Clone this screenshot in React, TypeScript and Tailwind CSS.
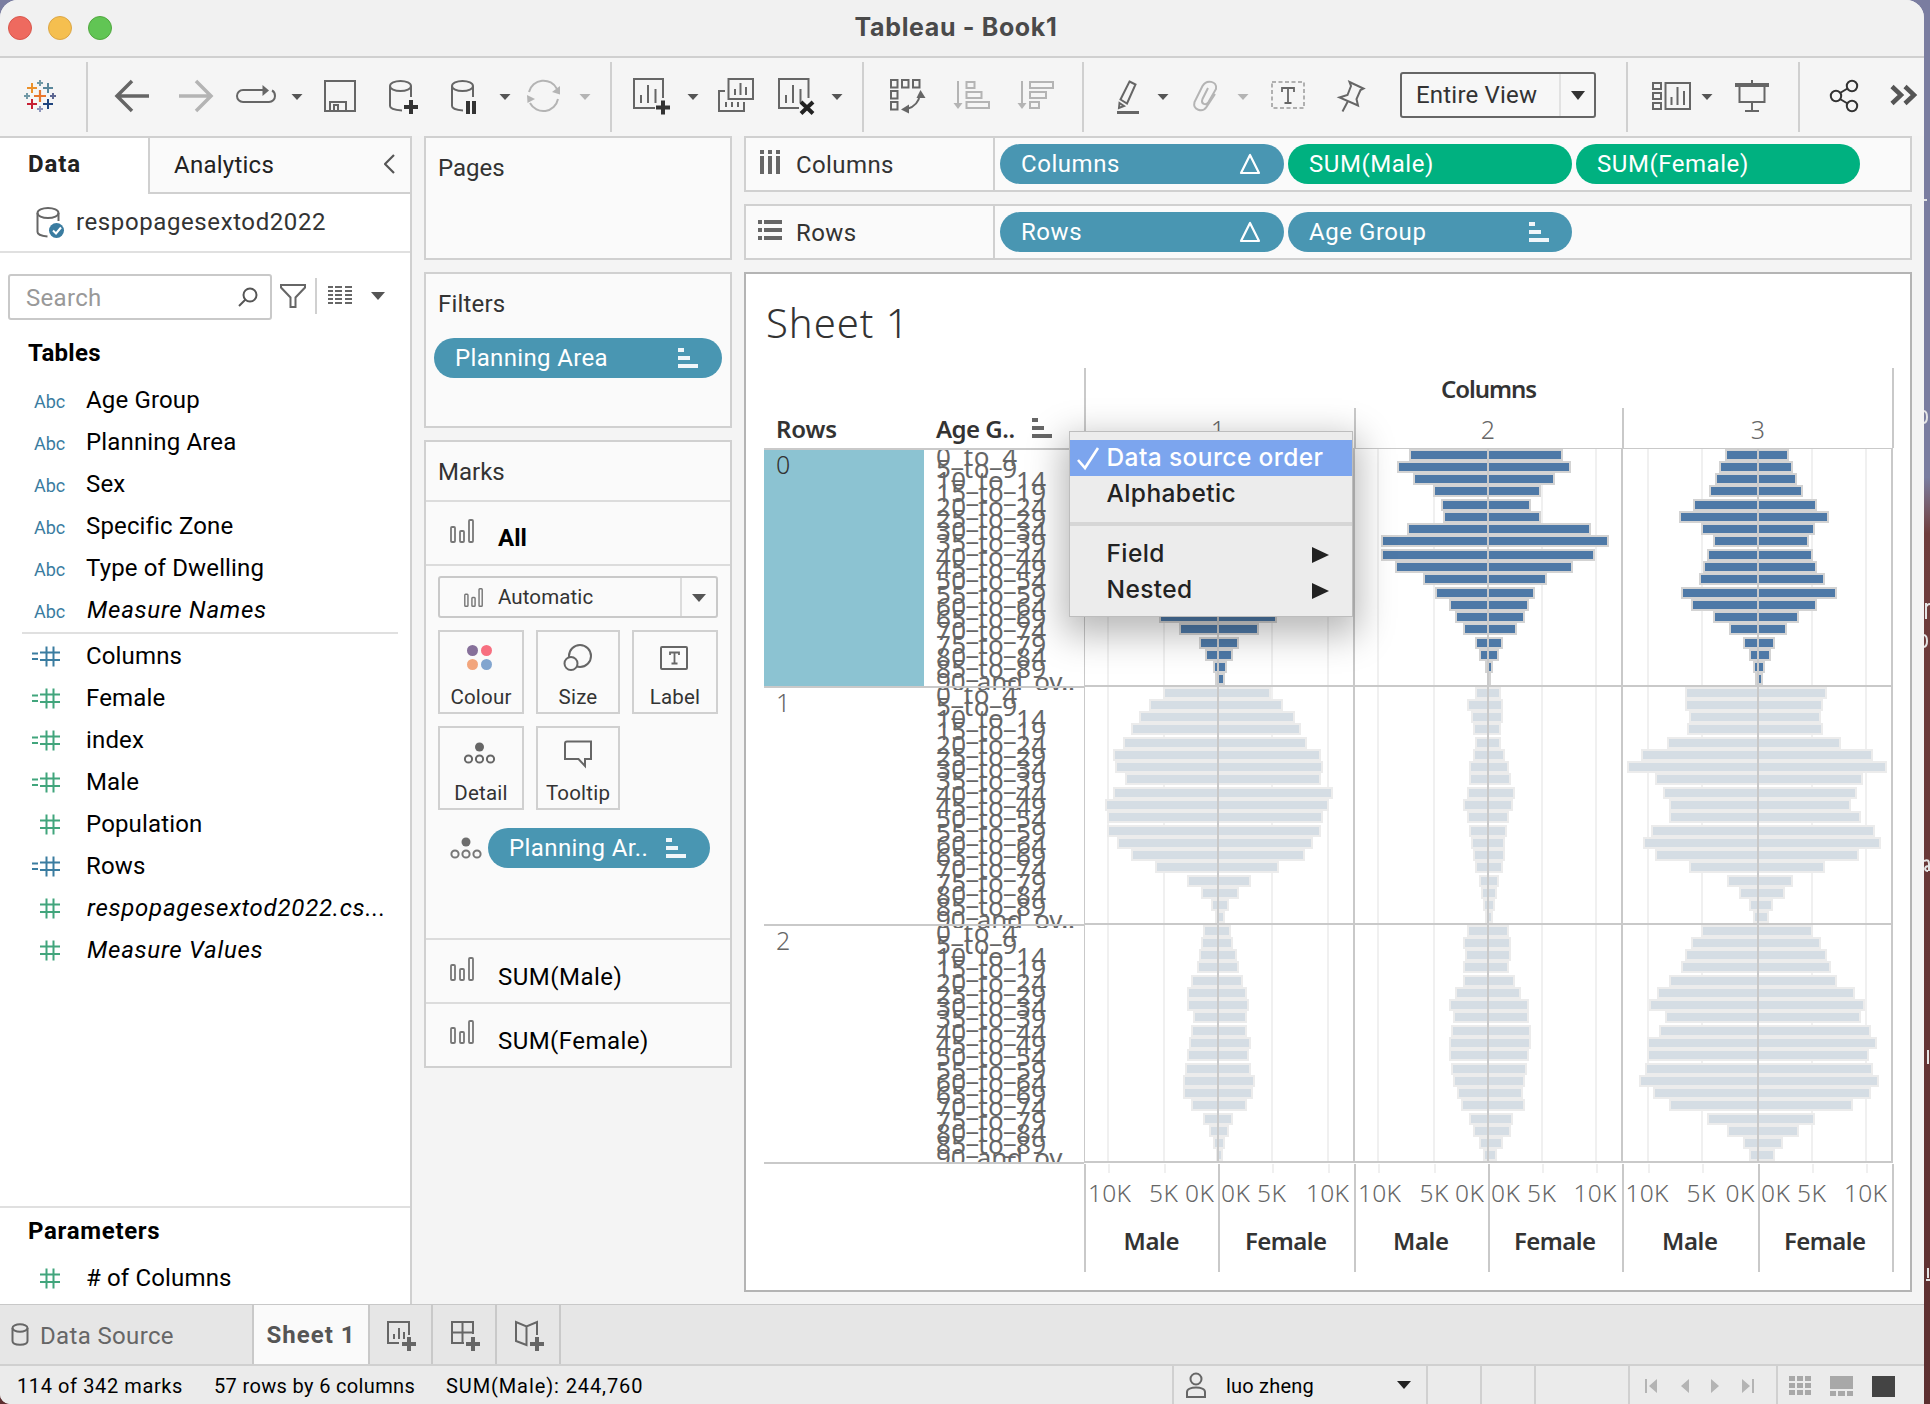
import React from "react";

const AGES = [
  "0_to_4", "5_to_9", "10_to_14", "15_to_19", "20_to_24", "25_to_29", "30_to_34",
  "35_to_39", "40_to_44", "45_to_49", "50_to_54", "55_to_59", "60_to_64", "65_to_69",
  "70_to_74", "75_to_79", "80_to_84", "85_to_89", "90_and_ov..",
];

/* vertical centre of every age band, relative to the top of its pane */
const BANDS = [7, 19, 31, 43, 57, 69, 81, 93, 107, 119, 131, 145, 157, 169, 181, 195, 207, 219, 231];
const PANE_TOPS = [448, 686, 924];

type Pane = { male: number[]; female: number[] };

const PANES: Pane[][] = [
  [
    {
      male: [70, 74, 76, 80, 84, 88, 90, 92, 94, 90, 86, 80, 72, 59, 39, 19, 13, 5, 3],
      female: [70, 74, 76, 80, 84, 88, 90, 92, 94, 90, 86, 80, 72, 59, 41, 21, 15, 9, 7],
    },
    {
      male: [79, 91, 75, 55, 47, 45, 81, 107, 107, 93, 65, 53, 39, 33, 25, 13, 9, 3, 1],
      female: [75, 83, 67, 53, 43, 53, 103, 121, 107, 85, 59, 47, 41, 37, 29, 15, 11, 5, 3],
    },
    {
      male: [33, 39, 43, 49, 65, 79, 57, 45, 51, 55, 59, 77, 67, 45, 29, 15, 9, 5, 3],
      female: [31, 35, 39, 45, 59, 71, 57, 51, 55, 59, 67, 79, 59, 41, 29, 17, 13, 7, 5],
    },
  ],
  [
    {
      male: [55, 69, 79, 87, 95, 105, 103, 93, 105, 113, 111, 111, 101, 87, 63, 31, 17, 7, 3],
      female: [53, 65, 77, 83, 89, 103, 105, 103, 115, 111, 105, 103, 95, 87, 61, 33, 21, 11, 7],
    },
    {
      male: [13, 21, 17, 15, 13, 15, 19, 19, 21, 25, 21, 19, 17, 15, 13, 9, 7, 5, 3],
      female: [13, 15, 15, 13, 13, 17, 21, 23, 27, 25, 21, 19, 17, 17, 15, 11, 9, 7, 5],
    },
    {
      male: [73, 73, 69, 71, 91, 117, 131, 103, 95, 89, 89, 107, 115, 103, 69, 31, 19, 9, 5],
      female: [69, 65, 63, 65, 83, 115, 129, 105, 99, 93, 103, 117, 123, 101, 67, 35, 27, 15, 11],
    },
  ],
  [
    {
      male: [15, 17, 19, 21, 27, 31, 31, 25, 27, 29, 31, 33, 35, 35, 27, 15, 9, 5, 2],
      female: [13, 15, 19, 21, 25, 29, 31, 29, 29, 33, 31, 33, 37, 35, 29, 15, 11, 7, 5],
    },
    {
      male: [21, 25, 23, 25, 25, 33, 39, 35, 37, 39, 39, 37, 35, 31, 27, 19, 15, 9, 5],
      female: [21, 23, 23, 21, 27, 33, 41, 41, 43, 43, 41, 39, 37, 35, 37, 25, 23, 15, 9],
    },
    {
      male: [57, 67, 73, 77, 89, 101, 109, 93, 99, 111, 111, 113, 119, 105, 89, 51, 31, 15, 9],
      female: [55, 63, 69, 73, 79, 97, 107, 103, 113, 119, 111, 115, 121, 113, 95, 57, 41, 25, 17],
    },
  ],
];

const COLS = [
  { name: "1", zero: 1218, grid: [1108, 1164, 1272, 1328], labels: [1088, 1149, 1185, 1221, 1257, 1306], male: 1151.5, female: 1286 },
  { name: "2", zero: 1488, grid: [1378, 1434, 1542, 1596], labels: [1358, 1419.5, 1455, 1491, 1527, 1573.5], male: 1421, female: 1555 },
  { name: "3", zero: 1758, grid: [1648, 1702, 1812, 1866], labels: [1625.5, 1686.5, 1725.5, 1761, 1797, 1844], male: 1690, female: 1825 },
];
const AXIS = ["10K", "5K", "0K", "0K", "5K", "10K"];

function Bars({ pane, zero, top, active }: { pane: Pane; zero: number; top: number; active: boolean }) {
  const fill = active ? "#4e79a7" : "#d5dde4";
  const edge = active ? "#d3d3d3" : "#ececec";
  return (
    <g>
      {BANDS.map((b, i) => {
        const l = zero - pane.male[i];
        const r = zero + pane.female[i];
        const y = top + b - 6;
        return (
          <g key={i}>
            <rect x={l} y={y} width={r - l} height={12} fill={edge} />
            {pane.male[i] > 2 && <rect x={l + 2} y={y + 2} width={zero - l - 3} height={8} fill={fill} />}
            {pane.female[i] > 3 && <rect x={zero + 1} y={y + 2} width={r - zero - 3} height={8} fill={fill} />}
          </g>
        );
      })}
    </g>
  );
}

function Viz() {
  return (
    <svg width="1136" height="920" viewBox="760 360 1136 920" className="block font-['Noto_Sans',sans-serif]">
      <defs>
        {PANE_TOPS.map((t, i) => (
          <clipPath id={"pane" + i} key={i}>
            <rect x="924" y={t + 2} width="160" height={i === 2 ? 236 : 240} />
          </clipPath>
        ))}
      </defs>
      <rect x="764" y="450" width="160" height="236" fill="#8cc3d2" />
      <g fill="#333" fontSize="24" fontWeight="600">
        <text x="776" y="438" textLength="61">Rows</text>
        <text x="936" y="438" textLength="79">Age G..</text>
        <text x="1489" y="398" textAnchor="middle" textLength="96">Columns</text>
      </g>
      <path d="M1032 418h6v4h-6zM1032 426h12v4h-12zM1032 434h20v4h-20z" fill="#666" />
      <g fill="#666" fontSize="25" fontWeight="350">
        {PANE_TOPS.map((t, i) => (
          <text key={i} x="776" y={t + 26} fill={i === 0 ? "#333" : "#666"}>{i}</text>
        ))}
        {COLS.map((c) => (
          <text key={c.name} x={c.zero} y="438.5" textAnchor="middle">{c.name}</text>
        ))}
      </g>
      <g fill="#666" fontSize="26" fontWeight="400">
        {PANE_TOPS.map((t, p) => (
          <g key={p} clipPath={`url(#pane${p})`}>
            {AGES.map((a, i) => (
              <text key={a} x="936" y={t + BANDS[i] + (i === 18 ? 12 : 11)} textLength={i < 2 ? 81 : i === 18 ? 139 : 110}>{a}</text>
            ))}
          </g>
        ))}
      </g>
      <g fill="#f0f0f0">
        {COLS.map((c) =>
          c.grid.map((x) => (
            <g key={x}>
              <rect x={x - 1} y="449" width="2" height="713" />
              <rect x={x} y="1164" width="2" height="9" />
            </g>
          ))
        )}
      </g>
      {PANES.map((row, r) =>
        row.map((p, c) => <Bars key={`${r}-${c}`} pane={p} zero={COLS[c].zero} top={PANE_TOPS[r]} active={r === 0} />)
      )}
      <g fill="#c9c9c9">
        <rect x="764" y="448" width="320" height="2" />
        <rect x="1084" y="448" width="809" height="1" />
        {[686, 924, 1162].map((y) => (
          <g key={y}>
            <rect x="764" y={y} width="320" height="2" />
            <rect x="1084" y={y - 1} width="809" height="2" />
          </g>
        ))}
        <rect x="1084" y="448" width="1" height="714" />
        {[1217, 1353, 1487, 1621, 1757, 1891].map((x) => (
          <rect key={x} x={x} y="448" width="2" height="714" />
        ))}
        <rect x="1084" y="368" width="2" height="80" />
        <rect x="1354" y="408" width="2" height="40" />
        <rect x="1622" y="408" width="2" height="40" />
        <rect x="1892" y="368" width="2" height="80" />
        {[1084, 1218, 1354, 1488, 1622, 1758, 1892].map((x) => (
          <rect key={x} x={x} y="1164" width="2" height="108" />
        ))}
      </g>
      {COLS.map((c) => (
        <g key={c.name}>
          <g fill="#666" fontSize="24.5" fontWeight="350">
            {AXIS.map((a, i) => (
              <text key={i} x={c.labels[i]} y="1202" textLength={a === "10K" ? 43 : 29}>{a}</text>
            ))}
          </g>
          <g fill="#333" fontSize="24" fontWeight="600" textAnchor="middle">
            <text x={c.male} y="1250" textLength="56">Male</text>
            <text x={c.female} y="1250" textLength="82">Female</text>
          </g>
        </g>
      ))}
    </svg>
  );
}

/* toolbar cell; children are drawn in window coordinates */
function Tool({ x, w, color = "#666", children }: { x: number; w: number; color?: string; children: React.ReactNode }) {
  return (
    <svg width={w} height="78" viewBox={`${x} 58 ${w} 78`} fill="none" stroke={color} strokeWidth="2" className="block shrink-0">
      {children}
    </svg>
  );
}
const Caret = ({ x, color = "#555" }: { x: number; color?: string }) => (
  <path d={`M${x} 94h11l-5.5 6z`} fill={color} stroke="none" />
);
const Plus = ({ x, y, c = "#333" }: { x: number; y: number; c?: string }) => (
  <path d={`M${x - 7} ${y}h14M${x} ${y - 7}v14`} stroke={c} strokeWidth="4" />
);
const Sep = () => <div className="h-[70px] w-[2px] shrink-0 bg-[#d0d0d0]" />;

function Toolbar() {
  return (
    <div className="flex h-[78px] shrink-0 items-center bg-[#f5f5f5]">
      <Tool x={0} w={86}>
        <path d="M34 96h12M40 90v12" stroke="#e8762d" strokeWidth="2.2" />
        <path d="M27 88h10M32 83v10" stroke="#eb912b" />
        <path d="M43 88h10M48 83v10" stroke="#59879b" />
        <path d="M27 104h10M32 99v10" stroke="#c72035" />
        <path d="M43 104h10M48 99v10" stroke="#1f447e" />
        <path d="M37 83h6M40 80v6M24 96h6M27 93v6" stroke="#7199a6" />
        <path d="M37 109h6M40 106v6" stroke="#8d95bb" />
        <path d="M50 96h6M53 93v6" stroke="#5c6692" />
      </Tool>
      <Sep />
      <Tool x={88} w={76}><path d="M149 96H117M132 81 117 96l15 15" strokeWidth="3.5" /></Tool>
      <Tool x={164} w={60} color="#b4b4b4"><path d="M179 96h32M196 81l15 15-15 15" strokeWidth="3.5" /></Tool>
      <Tool x={224} w={86}>
        <path d="M265 90H243a6 6 0 0 0-6 6v0a6 6 0 0 0 6 6h26a6 6 0 0 0 6-6c0-2.500-1-4.500-3-5.500" />
        <path d="M262.500 85l6.500 5.500-6.500 5.500z" fill="#666" stroke="none" />
        <Caret x={291.500} />
      </Tool>
      <Tool x={310} w={66}>
        <path d="M325 81h30v30h-30zM330 111v-9h16v9M334 105h4v6h-4z" />
      </Tool>
      <Tool x={376} w={60}>
        <ellipse cx="400.500" cy="86" rx="10.500" ry="5" />
        <path d="M390 86v20c0 2 4 4 12 4.500M411 86v11" /><Plus x={411} y={107} />
      </Tool>
      <Tool x={436} w={80}>
        <ellipse cx="462.500" cy="86" rx="10.500" ry="5" />
        <path d="M452 86v20c0 2 4 4 11 4.500M473 86v11" />
        <path d="M468 101v13M474 101v13" stroke="#333" strokeWidth="4" /><Caret x={499.500} />
      </Tool>
      <Tool x={516} w={94} color="#b4b4b4">
        <path d="M529 92a15 15 0 0 1 28-3M558 99a15 15 0 0 1-28 4" />
        <path d="M552 92l8 2.500V86zM527 95l8 4-7.500 4z" fill="#b4b4b4" stroke="none" /><Caret x={579.500} color="#b4b4b4" />
      </Tool>
      <Sep />
      <Tool x={612} w={94}>
        <path d="M655 108h-21V79h29v19M641 95v8M648 85v18M655.500 89v14" /><Plus x={663} y={107.500} /><Caret x={687.500} />
      </Tool>
      <Tool x={706} w={60}>
        <path d="M728.500 79h24.500v20h-24.500zM725 91h-6v20h25v-9M735 89v6M740.500 83v12M746 87v8M726 102v5M732 102v5M738 102v5" />
      </Tool>
      <Tool x={766} w={96}>
        <path d="M799 108h-20V79h29.500v19M786 95v8M793 85v18M800.500 89v14" />
        <path d="M801 102l12 11.500M813 102l-12 11.500" stroke="#222" strokeWidth="4" /><Caret x={831.500} />
      </Tool>
      <Sep />
      <Tool x={864} w={76}>
        <path d="M891 80h6.500v7.500H891zM902 80h6.500v7.500H902zM913 80h6.500v7.500H913zM891 91h6.500v7.500H891zM891 102h6.500v7.500H891zM907 109c7-2 12-7 13-15" />
        <path d="M920.500 90l5 8h-9zM901 109.500l8-5v9z" fill="#666" stroke="none" />
      </Tool>
      <Tool x={940} w={64} color="#b4b4b4">
        <path d="M958 81v24M966.500 82h8v6h-8zM966.500 92h15v6h-15zM966.500 102h22.500v6h-22.500z" />
        <path d="M953.500 103h9l-4.500 6z" fill="#b4b4b4" stroke="none" />
      </Tool>
      <Tool x={1004} w={78} color="#b4b4b4">
        <path d="M1022 81v24M1030 82h23v6h-23zM1030 92h16v6h-16zM1030 102h9v6h-9z" />
        <path d="M1017.500 103h9l-4.500 6z" fill="#b4b4b4" stroke="none" />
      </Tool>
      <Sep />
      <Tool x={1084} w={96}>
        <path d="M1129.500 81.500l6 3-8.500 19-6.500-4zM1119.500 103l4.500 3-5 2z" />
        <path d="M1117 112.500h22" strokeWidth="3" /><Caret x={1157.500} />
      </Tool>
      <Tool x={1180} w={80} color="#b4b4b4">
        <path d="M1215 94l-8.500 13c-4 6-14 3-12-5l8-16c4-7 15-5 13.500 3l-7.500 13c-2.500 4-8 2-6-3l5.500-11" /><Caret x={1237.500} color="#b4b4b4" />
      </Tool>
      <Tool x={1260} w={60} color="#b0b0b0">
        <rect x="1272" y="82" width="32" height="26" strokeDasharray="4 2.500" />
        <path d="M1282 92v-4h12v4M1288 88v15M1284.500 103h7" stroke="#666" strokeWidth="1.800" />
      </Tool>
      <Tool x={1320} w={80}>
        <path d="M1349.500 82l14 6.500-3 1.500-4 9 1.500 6.500-18.500-8 8-2.500 3.500-9zM1347.500 102l-5 9.500" />
      </Tool>
      <div className="mb-[4px] flex h-[46px] w-[196px] shrink-0 items-center rounded-[3px] border-2 border-[#666] bg-[#f7f7f7]">
        <div className="w-[157px] pl-[14px] text-[24px] leading-[30px] tracking-[0.2px] text-[#333]">Entire View</div>
        <div className="h-full w-[2px] bg-[#e2e2e2]" />
        <svg width="33" height="42" className="block"><path d="M10 17h14l-7 9z" fill="#333" /></svg>
      </div>
      <div className="w-[30px] shrink-0" />
      <Sep />
      <Tool x={1628} w={94}>
        <path d="M1653 83h8v6h-8zM1653 93h8v6h-8zM1653 103h8v6h-8zM1665.500 83h24.500v26h-24.500zM1671.500 97v8M1677.500 87v18M1684 91v14" /><Caret x={1701.500} />
      </Tool>
      <Tool x={1722} w={76}>
        <path d="M1752 80v4M1739.500 87v15h25V87M1752 102v9M1745 111h14" /><path d="M1735 85h34" strokeWidth="4" />
      </Tool>
      <Sep />
      <Tool x={1800} w={76} color="#333">
        <circle cx="1836" cy="96" r="5.200" /><circle cx="1852" cy="86" r="5.200" /><circle cx="1852" cy="106" r="5.200" />
        <path d="M1840 93l7.500-4.500M1840 99l7.500 4.500" />
      </Tool>
      <Tool x={1876} w={48} color="#555"><path d="M1892 86.500l9 8.500-9 8.500M1905 86.500l9 8.500-9 8.500" strokeWidth="4.500" /></Tool>
    </div>
  );
}

function Hash({ color, calc }: { color: string; calc?: boolean }) {
  return (
    <svg width="30" height="22" viewBox="0 0 30 22" fill="none" stroke={color} strokeWidth="2" className="block">
      {calc && <path d="M1 8.500h6M1 14h6" />}
      <path d="M9 7.500h20M9 15h20M15.500 1.500v20M22.500 1.500v20" />
    </svg>
  );
}

const BLUE = "#3a7ca0";
const GREEN = "#41a57c";

function Field({ label, kind, italic, blue }: { label: string; kind: "abc" | "calc" | "num"; italic?: boolean; blue?: boolean }) {
  return (
    <div className="flex h-[42px] shrink-0 items-center">
      <div className="w-[86px] shrink-0">
        {kind === "abc" ? (
          <div className="pt-[2px] pl-[34px] text-[18px] text-[#3a7ca0]">Abc</div>
        ) : (
          <div className="pl-[31px]"><Hash color={blue ? BLUE : GREEN} calc={kind === "calc"} /></div>
        )}
      </div>
      <div className={italic ? "pl-px text-[24px] tracking-[0.75px] whitespace-nowrap text-black italic" : "text-[24px] tracking-[0.15px] whitespace-nowrap text-black"}>{label}</div>
    </div>
  );
}

function DataPane() {
  return (
    <div className="flex w-[412px] shrink-0 flex-col border-t-2 border-r-2 border-[#d0d0d0] bg-white">
      <div className="flex h-[56px] shrink-0">
        <div className="w-[148px] pt-[11px] pl-[28px] text-[24px] leading-[30px] font-bold tracking-[0.9px] text-[#222]">Data</div>
        <div className="flex flex-1 items-center border-b-2 border-l-2 border-[#d0d0d0] bg-[#fafafa] pl-[24px]">
          <div className="flex-1 text-[24px] tracking-[0.25px] text-[#222]">Analytics</div>
          <svg width="26" height="28" viewBox="0 0 26 28" className="block" fill="none" stroke="#555" strokeWidth="2.200"><path d="M10 4 1 13l9 9" /></svg>
        </div>
      </div>
      <div className="flex h-[59px] shrink-0 items-center border-b-2 border-[#e0e0e0] pl-[36px]">
        <svg width="30" height="34" viewBox="0 0 30 34" className="mt-px block" fill="none" stroke="#666" strokeWidth="2">
          <ellipse cx="12" cy="7" rx="10.500" ry="5" /><path d="M1.500 7v19c0 2 4 4 10 4.500M22.500 7v8" />
          <circle cx="20.500" cy="24.500" r="7.500" fill="#3a7ca0" stroke="none" /><path d="M17 24.500l3 3 5-6" stroke="#fff" />
        </svg>
        <div className="pb-[2px] pl-[10px] text-[24px] tracking-[0.6px] text-[#333]">respopagesextod2022</div>
      </div>
      <div className="mt-[21px] flex h-[46px] shrink-0 items-center pl-[8px]">
        <div className="flex h-[46px] w-[264px] items-center rounded-[3px] border-2 border-[#c9c9c9] pl-[16px]">
          <div className="flex-1 pt-px text-[24px] tracking-[0.3px] text-[#999]">Search</div>
          <svg width="34" height="26" viewBox="0 0 34 26" className="block" fill="none" stroke="#555" strokeWidth="2"><circle cx="14" cy="11" r="6.500" /><path d="M9.500 15.500 3 22" /></svg>
        </div>
        <svg width="130" height="46" viewBox="272 274 130 46" className="block" fill="none" stroke="#666" strokeWidth="2">
          <path d="M281 285h24v2.500l-9.500 10V307h-5v-9.500l-9.500-10z" />
          <path d="M316 278v36" stroke="#d0d0d0" />
          <path d="M328 287h5M335 287h7M345 287h7M328 291h5M335 291h7M345 291h7M328 295h5M335 295h7M345 295h7M328 299h5M335 299h7M345 299h7M328 303h5M335 303h7M345 303h7" />
          <path d="M371 292h14l-7 8z" fill="#555" stroke="none" />
        </svg>
      </div>
      <div className="mt-[18px] mb-[11px] h-[30px] shrink-0 pl-[28px] text-[24px] leading-[30px] font-bold tracking-[0.3px] text-black">Tables</div>
      <Field label="Age Group" kind="abc" />
      <Field label="Planning Area" kind="abc" />
      <Field label="Sex" kind="abc" />
      <Field label="Specific Zone" kind="abc" />
      <Field label="Type of Dwelling" kind="abc" />
      <Field label="Measure Names" kind="abc" italic />
      <div className="my-px mr-[12px] ml-[22px] h-[2px] shrink-0 bg-[#e0e0e0]" />
      <Field label="Columns" kind="calc" blue />
      <Field label="Female" kind="calc" />
      <Field label="index" kind="calc" />
      <Field label="Male" kind="calc" />
      <Field label="Population" kind="num" />
      <Field label="Rows" kind="calc" blue />
      <Field label="respopagesextod2022.cs..." kind="num" italic />
      <Field label="Measure Values" kind="num" italic />
      <div className="flex-1" />
      <div className="h-[98px] shrink-0 border-t-2 border-[#e0e0e0]">
        <div className="pt-[8px] pl-[28px] text-[24px] leading-[30px] font-bold tracking-[0.7px] text-black">Parameters</div>
        <div className="mt-[11px]"><Field label="# of Columns" kind="num" /></div>
      </div>
    </div>
  );
}

const SortIcon = ({ color = "#f0f6fa" }: { color?: string }) => (
  <svg width="20" height="20" className="block shrink-0"><path d="M0 0h6v4H0zM0 8h12v4H0zM0 16h20v4H0z" fill={color} /></svg>
);
const Delta = () => (
  <svg width="22" height="24" className="block shrink-0" fill="none" stroke="#fff" strokeWidth="2.200"><path d="M11 3 2 21h18z" strokeLinejoin="round" /></svg>
);
const BarsIcon = ({ size = 24 }: { size?: number }) => (
  <svg width={size} height={size} viewBox="0 0 24 24" className="block shrink-0" fill="none" stroke="#777" strokeWidth="1.800">
    <rect x="1" y="8" width="4" height="15" rx="1" /><rect x="10" y="12" width="4" height="11" rx="1" /><rect x="19" y="1" width="4" height="22" rx="1" />
  </svg>
);
const DetailIcon = () => (
  <svg width="32" height="24" viewBox="0 0 32 24" className="block shrink-0" fill="none" stroke="#777" strokeWidth="2">
    <circle cx="16" cy="6" r="4.500" fill="#6e6e6e" stroke="none" /><circle cx="5" cy="18" r="3.600" /><circle cx="16" cy="18" r="3.600" /><circle cx="27" cy="18" r="3.600" />
  </svg>
);

function Pill({ label, icon, green }: { label: string; icon?: React.ReactNode; green?: boolean }) {
  return (
    <div className={green ? "flex h-[40px] w-[284px] items-center rounded-full bg-[#00b180] pr-[23px] pl-[21px]" : "flex h-[40px] w-[284px] items-center rounded-full bg-[#4996b2] pr-[23px] pl-[21px]"}>
      <div className="flex-1 pb-px text-[24px] leading-[30px] tracking-[0.55px] text-white">{label}</div>
      {icon}
    </div>
  );
}

function MarkButton({ label, children }: { label: string; children: React.ReactNode }) {
  return (
    <div className="flex h-[84px] flex-col items-center border-2 border-[#d0d0d0]">
      <svg width="40" height="40" viewBox="0 0 40 40" className="mt-[6px] block" fill="none" stroke="#666" strokeWidth="2">{children}</svg>
      <div className="mt-[7px] text-[20.500px] leading-[24px] tracking-[0.2px] text-[#333]">{label}</div>
    </div>
  );
}

function Cards() {
  return (
    <div className="ml-[12px] flex w-[308px] shrink-0 flex-col gap-[12px] text-[24px] leading-[30px] text-[#333]">
      <div className="h-[124px] border-2 border-[#d0d0d0] bg-[#fafafa] pt-[15px] pl-[12px]">Pages</div>
      <div className="h-[156px] border-2 border-[#d0d0d0] bg-[#fafafa] pt-[15px]">
        <div className="pl-[12px] tracking-[0.2px]">Filters</div>
        <div className="mt-[19px] ml-[8px] flex h-[40px] w-[288px] items-center rounded-full bg-[#4996b2] pr-[24px] pl-[21px] tracking-[0.35px] text-white">
          <div className="flex-1">Planning Area</div>
          <SortIcon />
        </div>
      </div>
      <div className="h-[628px] border-2 border-[#d0d0d0] bg-[#fafafa]">
        <div className="h-[60px] border-b-2 border-[#dcdcdc] pt-[15px] pl-[12px]">Marks</div>
        <div className="flex h-[64px] items-center border-b-2 border-[#dcdcdc] pl-[24px]">
          <div className="mb-[4px]"><BarsIcon /></div>
          <div className="mt-[10px] pl-[24px] font-bold text-black">All</div>
        </div>
        <div className="flex h-[374px] flex-col border-b-2 border-[#dcdcdc] px-[12px] pt-[10px]">
          <div className="flex h-[42px] w-[280px] shrink-0 items-center rounded-[3px] border-2 border-[#c9c9c9]">
            <div className="flex w-[240px] items-center pl-[24px]">
              <BarsIcon size={19} />
              <div className="pl-[15px] text-[20.500px] tracking-[0.1px]">Automatic</div>
            </div>
            <div className="h-full w-[2px] bg-[#dcdcdc]" />
            <svg width="34" height="38" className="block"><path d="M10 16h14l-7 8z" fill="#555" /></svg>
          </div>
          <div className="mt-[12px] grid w-[280px] grid-cols-[86px_84px_86px] gap-[12px]">
            <MarkButton label="Colour">
              <g stroke="none"><circle cx="11.500" cy="12.500" r="5.500" fill="#86709a" /><circle cx="25.500" cy="12.500" r="5.500" fill="#f76f80" /><circle cx="11.500" cy="26.500" r="5.500" fill="#f2a57c" /><circle cx="25.500" cy="26.500" r="5.500" fill="#82a5cf" /></g>
            </MarkButton>
            <MarkButton label="Size">
              <circle cx="22" cy="18" r="11" /><circle cx="13" cy="25.500" r="6.500" fill="#fafafa" />
            </MarkButton>
            <MarkButton label="Label">
              <rect x="6" y="9" width="26" height="22" rx="1" /><path d="M15 17v-2.500h9V17M19.500 14.500v11M16.500 25.500h6" strokeWidth="1.800" />
            </MarkButton>
            <MarkButton label="Detail">
              <circle cx="18.500" cy="13" r="4.500" fill="#666" stroke="none" /><circle cx="7.500" cy="25" r="3.600" /><circle cx="18.500" cy="25" r="3.600" /><circle cx="29.500" cy="25" r="3.600" />
            </MarkButton>
            <MarkButton label="Tooltip">
              <path d="M9 7.500h24V25h-6v7l-6.500-7H7V9.500a2 2 0 0 1 2-2z" />
            </MarkButton>
          </div>
          <div className="mt-[18px] flex h-[40px] items-center pl-[12px]">
            <div className="w-[38px]"><DetailIcon /></div>
            <div className="flex h-[40px] w-[222px] items-center rounded-full bg-[#4996b2] pr-[24px] pl-[21px] tracking-[0.4px] text-white">
              <div className="flex-1 whitespace-nowrap">Planning Ar..</div>
              <SortIcon />
            </div>
          </div>
        </div>
        <div className="flex h-[64px] items-center border-b-2 border-[#dcdcdc] pl-[24px] tracking-[0.5px] text-black">
          <div className="mb-[4px]"><BarsIcon /></div>
          <div className="mt-[12px] pl-[24px]">SUM(Male)</div>
        </div>
        <div className="flex h-[62px] items-center pl-[24px] tracking-[0.45px] text-black">
          <div className="mb-[6px]"><BarsIcon /></div>
          <div className="mt-[12px] pl-[24px]">SUM(Female)</div>
        </div>
      </div>
    </div>
  );
}

function Shelf({ label, icon, children }: { label: string; icon: React.ReactNode; children: React.ReactNode }) {
  return (
    <div className="flex h-[56px] shrink-0 border-2 border-[#d0d0d0] bg-[#fafafa]">
      <div className="flex w-[249px] items-center border-r-2 border-[#d0d0d0] pl-[12px]">
        {icon}
        <div className="pt-px pl-[14px] text-[24px] tracking-[0.4px] text-[#333]">{label}</div>
      </div>
      <div className="flex items-center gap-[4px] pl-[5px]">{children}</div>
    </div>
  );
}

function MenuItem({ label, arrow, on }: { label: string; arrow?: boolean; on?: boolean }) {
  return (
    <div className={on ? "flex h-[36px] items-center bg-[#7ca5ee] text-white" : "flex h-[36px] items-center text-[#222]"}>
      <div className="w-[36.500px] shrink-0 pl-[6px]">
        {on && <svg width="24" height="26" className="block" fill="none" stroke="#fff" strokeWidth="2.600"><path d="M2 15l7 8L22 3" /></svg>}
      </div>
      <div className="flex-1 pb-[3px] whitespace-nowrap">{label}</div>
      {arrow && <svg width="40" height="20" className="mt-[2px] block"><path d="M0 2l17 8-17 8z" fill="#222" /></svg>}
    </div>
  );
}

function SortMenu() {
  return (
    <div className="absolute top-[157px] left-[323px] h-[186px] w-[284px] border border-[#bdbdbd] bg-[#ececec] pt-[8px] font-['Inter',sans-serif] text-[24.500px] leading-[30px] font-medium tracking-[0.4px] shadow-[0_12px_34px_6px_rgba(0,0,0,0.28)]">
      <MenuItem label="Data source order" on />
      <MenuItem label="Alphabetic" />
      <div className="mt-[10px] mb-[10px] h-[4px] bg-[#d6d6d6]" />
      <MenuItem label="Field" arrow />
      <MenuItem label="Nested" arrow />
    </div>
  );
}

function Sheet() {
  return (
    <div className="relative mt-[12px] h-[1020px] w-[1168px] border-2 border-[#b4b4b4] bg-white">
      <div className="h-[86px] pt-[23px] pl-[20px] font-['Noto_Sans',sans-serif] text-[40px] leading-[52px] font-light tracking-[1px] text-[#333]">Sheet 1</div>
      <div className="pl-[14px]"><Viz /></div>
      <SortMenu />
    </div>
  );
}

function TabBar() {
  return (
    <div className="flex h-[60px] shrink-0 border-t border-[#c8c8c8] bg-[#e6e6e6] text-[24px] text-[#666]">
      <div className="flex w-[252px] items-center pl-[11px]">
        <svg width="20" height="24" className="block" fill="none" stroke="#666" strokeWidth="2"><ellipse cx="9" cy="5" rx="7.500" ry="3.800" /><path d="M1.500 5v13c0 5 15 5 15 0V5" /></svg>
        <div className="pt-[2px] pl-[9px] tracking-[0.35px]">Data Source</div>
      </div>
      <div className="flex w-[118px] items-center justify-center border-x-2 border-[#c9c9c9] bg-[#fafafa] font-bold tracking-[1px] text-[#555]">Sheet 1</div>
      <div className="flex w-[63px] items-center justify-center border-r-2 border-[#c9c9c9] pl-px">
        <svg width="32" height="32" className="block" fill="none" stroke="#666" strokeWidth="2"><path d="M14 24H3V3h21v13M9 15v5M14 9v11M19 13v7" /><Plus x={24} y={25} c="#666" /></svg>
      </div>
      <div className="flex w-[64px] items-center justify-center border-r-2 border-[#c9c9c9] pl-[2px]">
        <svg width="32" height="32" className="block" fill="none" stroke="#666" strokeWidth="2"><path d="M15 24H3V3h21v12M13.500 3v21M3 13.500h21" /><Plus x={24} y={25} c="#666" /></svg>
      </div>
      <div className="flex w-[64px] items-center justify-center border-r-2 border-[#c9c9c9] pl-[2px]">
        <svg width="32" height="32" className="block" fill="none" stroke="#666" strokeWidth="2"><path d="M24 16V3L13.500 7.500 3 3v19l10.500 4V7.500" /><Plus x={24} y={25} c="#666" /></svg>
      </div>
    </div>
  );
}

function StatusBar() {
  return (
    <div className="flex h-[40px] shrink-0 border-t-2 border-[#d0d0d0] bg-[#ebebeb] text-[20px] leading-[40px] whitespace-nowrap text-black">
      <div className="w-[197px] pl-[17px] tracking-[0.6px]">114 of 342 marks</div>
      <div className="w-[231px] pl-[17px] tracking-[0.35px]">57 rows by 6 columns</div>
      <div className="w-[744px] pl-[18px] tracking-[0.9px]">SUM(Male): 244,760</div>
      <div className="flex w-[254px] items-center border-l-2 border-[#d0d0d0] pl-[12px]">
        <svg width="22" height="28" className="block" fill="none" stroke="#666" strokeWidth="2"><circle cx="10" cy="8" r="5.500" /><path d="M1 26v-5c0-6 18-6 18 0v5z" /></svg>
        <div className="flex-1 pt-px pl-[18px] tracking-[0.2px]">luo zheng</div>
        <svg width="31" height="20" className="block"><path d="M2 6h14l-7 8z" fill="#222" /></svg>
      </div>
      <div className="w-[54px] border-l-2 border-[#d0d0d0]" />
      <div className="w-[54px] border-l-2 border-[#d0d0d0]" />
      <div className="w-[94px] border-l-2 border-[#d0d0d0]" />
      <div className="w-[148px] border-l-2 border-[#d0d0d0]">
        <svg width="145" height="38" viewBox="1631 1366 145 38" className="block" fill="#b4b4b4">
          <path d="M1646 1379h2v14h-2zM1658 1379v14l-8-7zM1690 1379v14l-8-7zM1712 1379v14l8-7zM1743 1379v14l8-7zM1753 1379h2v14h-2z" />
        </svg>
      </div>
      <div className="flex-1 border-l-2 border-[#d0d0d0]">
        <svg width="145" height="38" viewBox="1778 1366 145 38" className="block" fill="#a8a8a8">
          <path d="M1789 1376h6v5h-6zM1797 1376h6v5h-6zM1805 1376h6v5h-6zM1789 1383h6v5h-6zM1797 1383h6v5h-6zM1805 1383h6v5h-6zM1789 1390h6v5h-6zM1797 1390h6v5h-6zM1805 1390h6v5h-6z" />
          <path d="M1830 1376h23v13h-23zM1830 1391h6v5h-6zM1838 1391h7v5h-7zM1847 1391h6v5h-6z" />
          <path d="M1872 1376h23v21h-23z" fill="#444" />
        </svg>
      </div>
    </div>
  );
}

/* slivers of the desktop icon labels that show past the window's edge */
function DesktopEdge() {
  return (
    <svg width="6" height="1404" viewBox="0 0 6 1404" className="block shrink-0" fill="none" stroke="#e4e4e4" strokeWidth="2">
      <path d="M0 200h3M0 411c4 1 4 11 0 12M2 603v16M2 607c1-3 4-3 4-3M0 635c4 1 4 11 0 12M0 861c4-2 5 0 5 3v7M5 866c-5 0-5 5-1 5M4 1050v14M2 1280h4M4 1268v10" />
    </svg>
  );
}

export default function App() {
  return (
    <div className="flex h-[1404px] w-[1930px] overflow-hidden bg-linear-to-b from-[#7a7da0] from-34% via-[#6f3d3c] via-38% to-[#5d2f30] font-['Roboto',sans-serif]">
      <div className="flex h-[1404px] w-[1924px] shrink-0 flex-col overflow-hidden rounded-t-[18px] rounded-bl-[10px] bg-[#f4f4f4]">
        <div className="flex h-[58px] shrink-0 items-center border-b-2 border-[#d0d0d0] bg-[#f1f1f1]">
          <div className="flex w-[400px] items-center gap-[16px] pl-[8px]">
            <div className="size-[24px] rounded-full border border-[#d8574d] bg-[#ee6a5f]" />
            <div className="size-[24px] rounded-full border border-[#dba646] bg-[#f5bf4f]" />
            <div className="size-[24px] rounded-full border border-[#51a73f] bg-[#61c554]" />
          </div>
          <div className="flex-1 pb-px pl-[3px] text-center font-['Inter',sans-serif] text-[25px] font-bold tracking-[0.65px] text-[#4a4a4a]">Tableau - Book1</div>
          <div className="w-[415px]" />
        </div>
        <Toolbar />
        <div className="flex h-[1168px] shrink-0">
          <DataPane />
          <Cards />
          <div className="ml-[12px] w-[1168px] shrink-0">
            <Shelf
              label="Columns"
              icon={<svg width="24" height="24" className="mb-[4px] block" fill="#666"><path d="M2 0h4v4H2zM10 0h4v4h-4zM18 0h4v4h-4zM2 6h4v18H2zM10 6h4v18h-4zM18 6h4v18h-4z" /></svg>}
            >
              <Pill label="Columns" icon={<Delta />} />
              <Pill label="SUM(Male)" green />
              <Pill label="SUM(Female)" green />
            </Shelf>
            <div className="h-[12px]" />
            <Shelf
              label="Rows"
              icon={<svg width="24" height="20" className="mb-[4px] block" fill="#666"><path d="M0 0h4v4H0zM6 0h18v4H6zM0 8h4v4H0zM6 8h18v4H6zM0 16h4v4H0zM6 16h18v4H6z" /></svg>}
            >
              <Pill label="Rows" icon={<Delta />} />
              <Pill label="Age Group" icon={<SortIcon />} />
            </Shelf>
            <Sheet />
          </div>
        </div>
        <TabBar />
        <StatusBar />
      </div>
      <DesktopEdge />
    </div>
  );
}
